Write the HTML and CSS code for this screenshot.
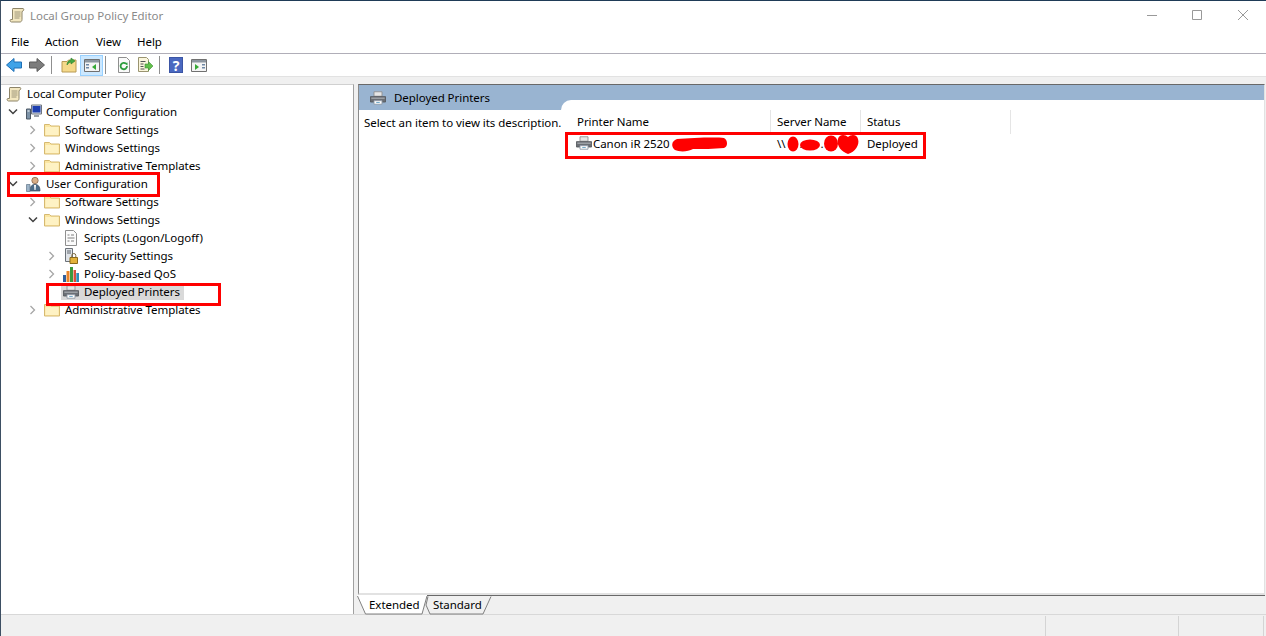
FILE: index.html
```html
<!DOCTYPE html>
<html lang="en">
<head>
<meta charset="utf-8">
<title>Local Group Policy Editor</title>
<link rel="stylesheet" href="styles.css">
</head>
<body>
<svg class="defs" width="0" height="0" aria-hidden="true">
  <defs>
    <symbol id="scroll" viewBox="0 0 16 16">
      <path d="M4 1.500h10c1 0 1 2 0 2.500l-1 .5v8c0 1.500-1 2.500-2 2.500H2.500c-1.500 0-2-2.500-.5-2.500h1.500V3c0-1 0-1.500.5-1.500z" fill="#f3e7c0" stroke="#8d8468"/>
      <path d="M5.500 5h6M5.500 7h6M5.500 9h6M5.500 11h5" stroke="#9c9478"/>
    </symbol>
    <symbol id="folder" viewBox="0 0 16 14">
      <path d="M.5 13V1.500h5l1.500 1.500h8.500v10z" fill="#fbe6a2" stroke="#d6b970"/>
      <path d="M1.500 12V4h13v8z" fill="#fef2c4"/>
    </symbol>
    <symbol id="chev-r" viewBox="0 0 8 10"><path d="M1.500 1l4 4-4 4" fill="none" stroke="#a6a6a6" stroke-width="1.300"/></symbol>
    <symbol id="chev-d" viewBox="0 0 10 8"><path d="M1 1.500l4 4 4-4" fill="none" stroke="#404040" stroke-width="1.500"/></symbol>
    <symbol id="printer" viewBox="0 0 18 16">
      <path d="M4.500 1h9v5h-9z" fill="#e6e6e6" stroke="#8f8f8f"/>
      <path d="M.5 6.500h17v6h-17z" fill="#6b6f75" stroke="#55585c"/>
      <path d="M1.500 7.500h15v1.500h-15z" fill="#a2a6ab"/>
      <path d="M4.500 11h9v4h-9z" fill="#fff" stroke="#8f9aa6"/>
      <path d="M7 13h4" stroke="#5a9cc0"/>
    </symbol>
    <symbol id="computer" viewBox="0 0 16 16">
      <path d="M5.500 1h10v9h-10z" fill="#d7dde6" stroke="#6d7480"/>
      <path d="M6.500 2h8v6.500h-8z" fill="#1d3fb0"/>
      <path d="M8 11h5v2H8z" fill="#9aa0a8"/>
      <path d="M.5 5h4v10h-4z" fill="#7d93a8" stroke="#4c5866"/>
      <path d="M1.500 7h2" stroke="#fff"/>
    </symbol>
    <symbol id="user" viewBox="0 0 16 16">
      <circle cx="9" cy="4.500" r="3.200" fill="#d9ad85" stroke="#7c5a41" stroke-width=".7"/>
      <path d="M4 15c0-5 2-6.500 5-6.500s5 1.500 5 6.500z" fill="#4d6c88" stroke="#3b4c5e" stroke-width=".7"/>
      <path d="M.5 8.500h3.500v7H.5z" fill="#9db4c8" stroke="#62768a" stroke-width=".7"/>
      <path d="M8 9h2l-.5 5h-1z" fill="#fff"/>
    </symbol>
    <symbol id="script" viewBox="0 0 16 16">
      <path d="M2.500.5h8l3 3v12h-11z" fill="#fbfbfb" stroke="#8f8f8f"/>
      <path d="M4.500 5h2M8 5h3M4.500 8h7M4.500 11h2M8 11h3" stroke="#7f7f7f"/>
    </symbol>
    <symbol id="security" viewBox="0 0 16 16">
      <path d="M2.500.5h7v13h-7z" fill="#dfe3e8" stroke="#6b7178"/>
      <path d="M4 3h4M4 5h4" stroke="#5f656c"/>
      <path d="M7 9.500h7.500v6H7z" fill="#e3b23a" stroke="#8c6a1a"/>
      <path d="M8.800 9.500V7.500a2 2 0 0 1 4 0v2" fill="none" stroke="#7d6a3e"/>
    </symbol>
    <symbol id="qos" viewBox="0 0 16 16">
      <path d="M0 9h3v7H0z" fill="#2f5f9e"/>
      <path d="M3.500 5h3v11h-3z" fill="#e8842a"/>
      <path d="M7 1h3v15H7z" fill="#3c9a3c"/>
      <path d="M10.500 4h2.500v12h-2.500z" fill="#d94f3a"/>
      <path d="M13.300 7H16v9h-2.700z" fill="#2a8fb8"/>
    </symbol>
  </defs>
</svg>

<div class="window">
  <header class="titlebar">
    <svg class="ic-16"><use href="#scroll"/></svg>
    <span class="title-text">Local Group Policy Editor</span>
    <div class="win-controls">
      <svg class="wc" viewBox="0 0 10 10"><path d="M0 5.500h10" stroke="#999"/></svg>
      <svg class="wc" viewBox="0 0 10 10"><path d="M.5.500h9v9h-9z" fill="none" stroke="#999"/></svg>
      <svg class="wc wc-close" viewBox="0 0 10 10"><path d="M0 0l10 10M10 0L0 10" stroke="#999"/></svg>
    </div>
  </header>

  <nav class="menubar">
    <span class="menu-file">File</span>
    <span class="menu-action">Action</span>
    <span class="menu-view">View</span>
    <span>Help</span>
  </nav>

  <div class="toolbar">
    <svg class="tb-ic" viewBox="0 0 16 16"><path d="M.5 8L8 1.500V5h7.500v6H8v3.500z" fill="#3fa3e8" stroke="#1f6fb5"/></svg>
    <svg class="tb-ic tb-forward" viewBox="0 0 16 16"><path d="M15.500 8L8 1.500V5H.5v6H8v3.500z" fill="#7d7d7d" stroke="#5c5c5c"/></svg>
    <i class="tb-sep"></i>
    <svg class="tb-ic" viewBox="0 0 16 16"><path d="M1 15V4.500h5l1.500-1.500h7.500v12z" fill="#f5d98a" stroke="#b89a55"/><path d="M6 8c0-3 1.500-4.500 4-5V1l4 3-4 3V5C8 5.500 7 6.500 6 8z" fill="#43a843" stroke="#2c7d2c" stroke-width=".6"/></svg>
    <div class="tb-active">
      <svg class="tb-ic" viewBox="0 0 16 16"><path d="M.5 2.500h15v12H.5z" fill="#f4f4f4" stroke="#707070"/><path d="M1 3h14v2.500H1z" fill="#8d96a0"/><path d="M2 7h3v1.500H2zM2 10h3v1.500H2z" fill="#6d87a5"/><path d="M12 7v6l-4-3z" fill="#35a835"/></svg>
    </div>
    <i class="tb-sep tb-sep-2"></i>
    <svg class="tb-ic" viewBox="0 0 16 16"><path d="M2.500.5h8l3 3v12h-11z" fill="#fafafa" stroke="#8f8f8f"/><path d="M11 9a3.200 3.200 0 1 1-1-2.300" fill="none" stroke="#2f9e3f" stroke-width="1.800"/><path d="M8.500 6.500l3-1v3z" fill="#2f9e3f"/></svg>
    <svg class="tb-ic tb-export" viewBox="0 0 16 16"><path d="M1.500.5h8l2 2v12h-10z" fill="#fbf6dc" stroke="#9a9470"/><path d="M3.500 4.500h5M3.500 7h3M3.500 9.500h3M3.500 12h4" stroke="#555"/><path d="M8 7h3.500V4.500L16 9l-4.500 4.500V11H8z" fill="#62c04a" stroke="#3f8f35" stroke-width=".6"/></svg>
    <i class="tb-sep tb-sep-3"></i>
    <span class="tb-help">?</span>
    <svg class="tb-ic tb-action" viewBox="0 0 16 16"><path d="M.5 2.500h15v12H.5z" fill="#f4f4f4" stroke="#707070"/><path d="M1 3h14v2.500H1z" fill="#8d96a0"/><path d="M4 7v6l4-3z" fill="#35a835"/><path d="M11 7h3v1.500h-3zM11 10h3v1.500h-3z" fill="#6d87a5"/></svg>
  </div>

  <div class="strip"></div>

  <main class="main">
    <aside class="tree-pane">
      <ul class="tree">
        <li class="row"><svg class="ic-tree root-ic"><use href="#scroll"/></svg><span>Local Computer Policy</span></li>
        <li class="row l1"><svg class="chev-d"><use href="#chev-d"/></svg><svg class="ic-tree"><use href="#computer"/></svg><span>Computer Configuration</span></li>
        <li class="row l2"><svg class="chev-r"><use href="#chev-r"/></svg><svg class="ic-tree"><use href="#folder"/></svg><span>Software Settings</span></li>
        <li class="row l2"><svg class="chev-r"><use href="#chev-r"/></svg><svg class="ic-tree"><use href="#folder"/></svg><span>Windows Settings</span></li>
        <li class="row l2"><svg class="chev-r"><use href="#chev-r"/></svg><svg class="ic-tree"><use href="#folder"/></svg><span>Administrative Templates</span></li>
        <li class="row l1"><svg class="chev-d"><use href="#chev-d"/></svg><svg class="ic-tree"><use href="#user"/></svg><span>User Configuration</span></li>
        <li class="row l2"><svg class="chev-r"><use href="#chev-r"/></svg><svg class="ic-tree"><use href="#folder"/></svg><span>Software Settings</span></li>
        <li class="row l2"><svg class="chev-d"><use href="#chev-d"/></svg><svg class="ic-tree"><use href="#folder"/></svg><span>Windows Settings</span></li>
        <li class="row l3"><i class="chev-space"></i><svg class="ic-tree"><use href="#script"/></svg><span>Scripts (Logon/Logoff)</span></li>
        <li class="row l3"><svg class="chev-r"><use href="#chev-r"/></svg><svg class="ic-tree"><use href="#security"/></svg><span>Security Settings</span></li>
        <li class="row l3"><svg class="chev-r"><use href="#chev-r"/></svg><svg class="ic-tree"><use href="#qos"/></svg><span>Policy-based QoS</span></li>
        <li class="row l3"><i class="chev-space-sel"></i><div class="sel"><svg class="ic-tree"><use href="#printer"/></svg><span>Deployed Printers</span></div></li>
        <li class="row l2"><svg class="chev-r"><use href="#chev-r"/></svg><svg class="ic-tree"><use href="#folder"/></svg><span>Administrative Templates</span></li>
      </ul>
    </aside>

    <section class="detail-pane">
      <div class="detail-frame">
        <div class="detail-head">
          <svg class="ic-tree"><use href="#printer"/></svg>
          <span>Deployed Printers</span>
        </div>
        <div class="detail-body">
          <p class="desc">Select an item to view its description.</p>
          <div class="list">
            <div class="list-head">
              <span class="col col-name">Printer Name</span>
              <span class="col col-server">Server Name</span>
              <span class="col col-status">Status</span>
            </div>
            <div class="list-row">
              <span class="cell-name"><svg class="ic-tree"><use href="#printer"/></svg>Canon iR 2520</span>
              <span class="cell-server">\\<span class="dot-1">.</span><span class="dot-2">.</span></span>
              <span class="cell-status">Deployed</span>
            </div>
          </div>
        </div>
      </div>
      <div class="tabs">
        <svg class="tab-shapes" viewBox="0 0 140 20" aria-hidden="true">
          <path d="M71 1.500L69 10l4 9h53l8-17.500" fill="#f0f0f0" stroke="#808080"/>
          <path d="M0 0l8.500 19H65L70 1V0z" fill="#fff"/>
          <path d="M.5 1l8 18H65l5-18" fill="none" stroke="#808080"/>
        </svg>
        <span class="tab tab-on">Extended</span>
        <span class="tab">Standard</span>
      </div>
    </section>
  </main>

  <footer class="statusbar">
    <i class="st st-1"></i><i class="st st-2"></i><i class="st st-3"></i>
  </footer>

  <svg class="scribble" viewBox="0 0 1266 636" aria-hidden="true">
    <path d="M677 139c14-1 38-2 47-1 4 2 4 9 0 10-10 1-22 1-31 1-5 3-14 3-18 1-4-3-4-9 2-11z" fill="#f00"/>
    <ellipse cx="793" cy="144" rx="5.500" ry="7.500" fill="#f00"/>
    <ellipse cx="810" cy="145" rx="10" ry="5.500" fill="#f00"/>
    <ellipse cx="831" cy="143.500" rx="7" ry="8" fill="#f00"/>
    <path d="M838 139c1-5 7-5 10-2 3-3 9-3 10 2 2 6-3 13-10 15-6-2-12-8-10-15z" fill="#f00"/>
  </svg>
  <div class="mark mark-user"></div>
  <div class="mark mark-printer"></div>
  <div class="mark mark-row"></div>
</div>
</body>
</html>
```

FILE: styles.css
```css
* { box-sizing: border-box; }
html, body { margin: 0; padding: 0; }
body {
  font-family: "Noto Sans", "Open Sans", "Liberation Sans", sans-serif;
  font-size: 11.5px;
  letter-spacing: -0.05px;
  color: #000;
  background: #fff;
  overflow: hidden;
}
.defs { display: block; height: 0; }
.window {
  position: relative;
  width: 1266px;
  height: 636px;
  display: flex;
  flex-direction: column;
  border-top: 1px solid #1f3b57;
  border-left: 1px solid #3d4f63;
  overflow: hidden;
}
.titlebar {
  height: 30px;
  flex: none;
  display: flex;
  align-items: center;
  padding: 0 0 2px 8px;
  color: #8a8a8a;
  background: #fff;
}
.ic-16 { width: 16px; height: 16px; flex: none; }
.title-text { margin-left: 5px; }
.win-controls {
  margin-left: auto;
  align-self: flex-start;
  margin-top: 9px;
  display: flex;
  gap: 35px;
  padding-right: 18px;
}
.wc { width: 10px; height: 10px; display: block; }
.wc-close { margin-left: 1px; }

.menubar {
  height: 23px;
  flex: none;
  display: flex;
  align-items: center;
  padding: 0 0 2px 10px;
  border-bottom: 1px solid #b0aeb8;
}
.menu-file { width: 34px; }
.menu-action { width: 51px; }
.menu-view { width: 41px; }

.toolbar {
  height: 22px;
  flex: none;
  display: flex;
  align-items: center;
  padding-left: 5px;
}
.tb-ic { width: 16px; height: 16px; display: block; flex: none; }
.tb-forward { margin-left: 7px; }
.tb-sep { width: 1px; height: 18px; background: #8f8f8f; margin: 0 9px 0 6px; flex: none; }
.tb-sep-2 { margin-left: 2px; margin-right: 10px; }
.tb-active {
  width: 23px;
  height: 21px;
  margin-left: 3px;
  display: flex;
  align-items: center;
  justify-content: center;
  background: #cce8ff;
  border: 1px solid #99d1ff;
  flex: none;
}
.tb-export { margin-left: 5px; }
.tb-help {
  width: 14px;
  height: 16px;
  flex: none;
  display: block;
  text-align: center;
  line-height: 15px;
  font-size: 14px;
  font-weight: 700;
  color: #fff;
  background: #4a68c0;
  border: 1px solid #3b55a5;
}
.tb-action { margin-left: 8px; }

.strip {
  height: 8px;
  flex: none;
  background: #f0f0f0;
  border-top: 1px solid #e2e2e2;
}

.main {
  flex: 1;
  min-height: 0;
  display: flex;
  background: #f0f0f0;
}
.tree-pane {
  width: 353px;
  flex: none;
  background: #fff;
  border-top: 1px solid #d0d0d0;
  border-right: 1px solid #a0a0a0;
}
.tree { list-style: none; margin: 0; padding: 0; }
.row {
  height: 18px;
  display: flex;
  align-items: center;
  white-space: nowrap;
}
.row span { margin-left: 5px; line-height: 16px; }
.ic-tree { width: 16px; height: 16px; flex: none; display: block; }
.root-ic { margin-left: 5px; }
.l1 { padding-left: 7px; }
.l1 span { margin-left: 4px; }
.l2 { padding-left: 25px; }
.l3 { padding-left: 44px; }
.chev-r { width: 8px; height: 10px; margin: 0 7px 0 3px; flex: none; }
.chev-d { width: 10px; height: 8px; margin: 0 8px 0 0; flex: none; }
.l2 .chev-d { margin-left: 2px; margin-right: 6px; }
.chev-space { width: 18px; height: 10px; flex: none; }
.chev-space-sel { width: 16px; height: 10px; flex: none; }
.sel {
  display: flex;
  align-items: center;
  height: 16px;
  padding: 0 4px 0 2px;
  background: #d9d9d9;
}

.detail-pane {
  flex: none;
  width: 907px;
  margin-left: 4px;
  display: flex;
  flex-direction: column;
  background: #f0f0f0;
}
.detail-frame {
  flex: 1;
  min-height: 0;
  background: #fff;
  border-top: 1px solid #696969;
  border-left: 1px solid #8a8a8a;
  border-right: 1px solid #e2e2e2;
  border-bottom: 2px solid #e2e2e2;
  display: flex;
  flex-direction: column;
}
.detail-head {
  height: 25px;
  flex: none;
  margin-bottom: -10px;
  display: flex;
  align-items: center;
  padding-left: 11px;
  gap: 8px;
  background: #99b4d1;
}
.detail-body { flex: 1; min-height: 0; display: flex; position: relative; }
.desc {
  width: 202px;
  flex: none;
  margin: 10px 0 0 0;
  padding: 5px 0 0 5px;
  line-height: 16px;
  white-space: nowrap;
  background: #fff;
}
.list {
  flex: 1;
  background: #fff;
  border-top-left-radius: 10px;
}
.list-head { height: 34px; display: flex; }
.col {
  height: 24px;
  margin-top: 10px;
  padding: 4px 0 0 6px;
  line-height: 16px;
  border-right: 1px solid #e5e5e5;
}
.col-name { width: 210px; padding-left: 16px; }
.col-server { width: 90px; }
.col-status { width: 150px; }
.list-row { display: flex; height: 20px; align-items: center; padding-bottom: 2px; }
.cell-name { width: 210px; padding-left: 15px; display: flex; align-items: center; gap: 1px; white-space: nowrap; }
.cell-server { width: 90px; padding-left: 6px; }
.dot-1 { margin-left: 14px; }
.dot-2 { margin-left: 18px; }
.cell-status { width: 150px; padding-left: 6px; }

.tabs {
  height: 19px;
  flex: none;
  display: flex;
  position: relative;
  border-top: 1px solid #696969;
  padding-left: 11px;
}
.tab-shapes { position: absolute; left: -1px; top: -1px; width: 140px; height: 20px; }
.tab { position: relative; display: block; height: 18px; line-height: 18px; }
.tab-on { width: 64px; }

.statusbar {
  height: 22px;
  flex: none;
  background: #f0f0f0;
  border-top: 1px solid #d8d8d8;
  display: flex;
  padding-top: 1px;
}
.st { display: block; width: 1px; background: #d4d4d4; height: 100%; }
.st-1 { margin-left: 1044px; }
.st-2 { margin-left: 132px; }
.st-3 { margin-left: 84px; }

.scribble { position: absolute; left: -1px; top: -1px; width: 1266px; height: 636px; pointer-events: none; }
.mark { position: absolute; border: 3px solid #f00; pointer-events: none; }
.mark-user { left: 6px; top: 171px; width: 153px; height: 25px; }
.mark-printer { left: 45px; top: 282px; width: 175px; height: 23px; }
.mark-row { left: 564px; top: 131px; width: 361px; height: 27px; }
```
